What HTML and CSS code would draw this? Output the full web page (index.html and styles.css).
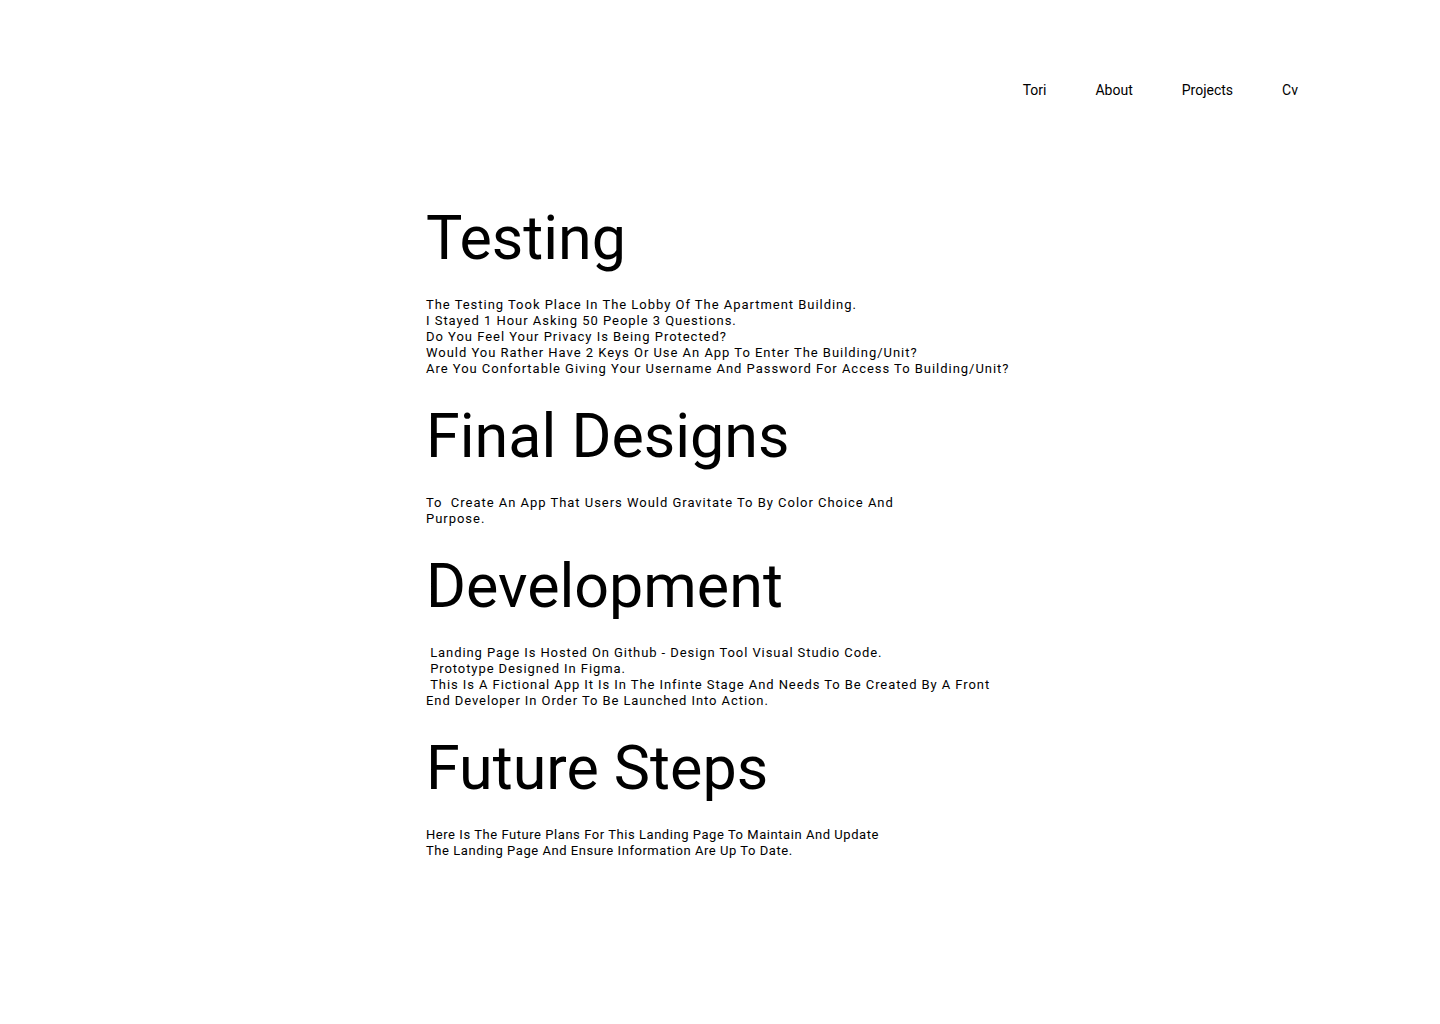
FILE: index.html
```html
<!DOCTYPE html>
<html lang="en">
<head>
<meta charset="utf-8">
<title>Project</title>
<link rel="stylesheet" href="styles.css">
</head>
<body>
<header class="topbar">
  <nav class="nav">
    <a class="nav-link" href="#">Tori</a>
    <a class="nav-link" href="#">About</a>
    <a class="nav-link" href="#">Projects</a>
    <a class="nav-link" href="#">Cv</a>
  </nav>
</header>
<main class="content">
  <section class="block block-first">
    <h2 class="title">Testing</h2>
    <p class="text text-testing">The Testing Took Place In The Lobby Of The Apartment Building.<br>I Stayed 1 Hour Asking 50 People 3 Questions.<br>Do You Feel Your Privacy Is Being Protected?<br>Would You Rather Have 2 Keys Or Use An App To Enter The Building/Unit?<br>Are You Confortable Giving Your Username And Password For Access To Building/Unit?</p>
  </section>
  <section class="block">
    <h2 class="title">Final Designs</h2>
    <p class="text text-final">To&nbsp; Create An App That Users Would Gravitate To By Color Choice And<br>Purpose.</p>
  </section>
  <section class="block">
    <h2 class="title">Development</h2>
    <p class="text text-dev">&nbsp;Landing Page Is Hosted On Github - Design Tool Visual Studio Code.<br>&nbsp;Prototype Designed In Figma.<br>&nbsp;This Is A Fictional App It Is In The Infinte Stage And Needs To Be Created By A Front<br>End Developer In Order To Be Launched Into Action.</p>
  </section>
  <section class="block">
    <h2 class="title">Future Steps</h2>
    <p class="text text-future">Here Is The Future Plans For This Landing Page To Maintain And Update<br>The Landing Page And Ensure Information Are Up To Date.</p>
  </section>
</main>
</body>
</html>
```

FILE: styles.css
```css
html, body {
  margin: 0;
  padding: 0;
  background: #ffffff;
  color: #000000;
  font-family: Roboto, "Noto Sans", sans-serif;
}

.topbar {
  display: flex;
  justify-content: flex-end;
  padding: 81px 142px 0 0;
}

.nav {
  display: flex;
  gap: 49px;
}

.nav-link {
  color: #000;
  text-decoration: none;
  font-size: 14px;
  line-height: 18px;
}

.content {
  padding: 0 0 0 426px;
  margin-top: 107px;
}

.block {
  margin-top: 27px;
}

.block-first {
  margin-top: 0;
}

.title {
  margin: 0 0 27px 0;
  font-size: 61px;
  line-height: 64px;
  font-weight: 400;
}

.text {
  margin: 0;
  font-size: 13px;
  line-height: 16px;
}

.text-testing {
  letter-spacing: 0.97px;
}

.text-final {
  letter-spacing: 0.97px;
}

.text-dev {
  letter-spacing: 0.92px;
}

.text-future {
  letter-spacing: 0.55px;
}
```
